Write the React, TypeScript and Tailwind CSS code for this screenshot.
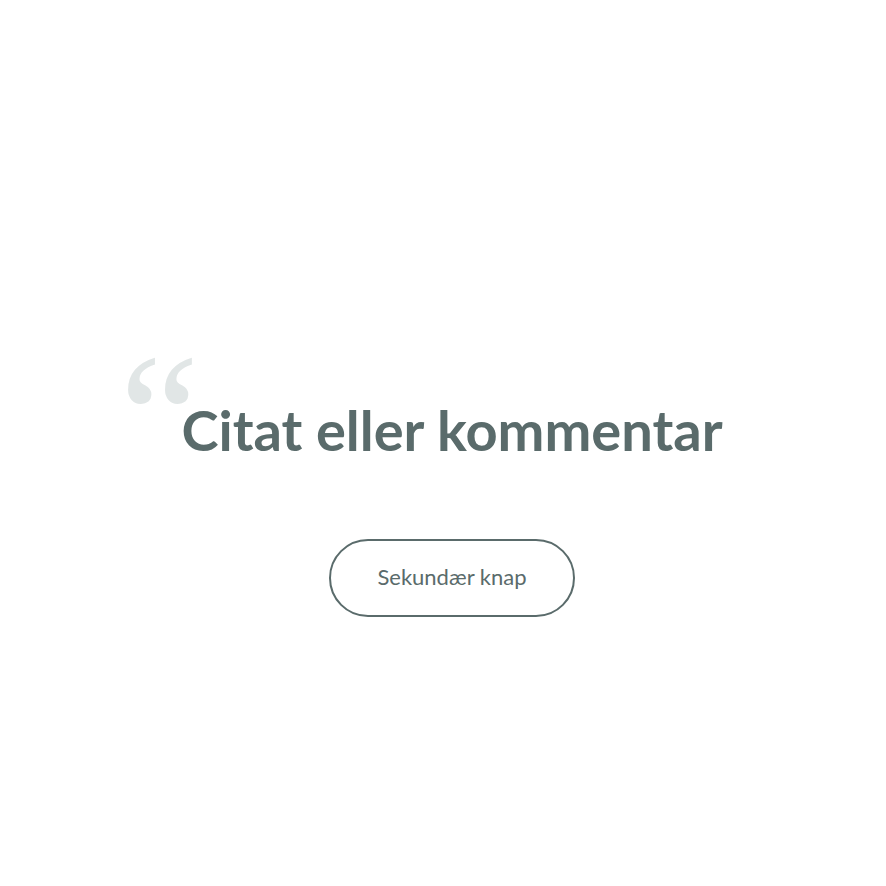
export default function App() {
  return (
    <div className="min-h-[886px] w-full bg-white flex flex-col items-center pt-[398px] pl-[18px] font-['Lato','Open_Sans',sans-serif] text-[#5a6b6b]">
      <div className="relative">
        <span className="absolute left-[-62px] top-[-70px] font-['Liberation_Serif',serif] text-[180px] leading-none text-[#e1e6e6] select-none">
          “
        </span>
        <h1 className="relative text-[56px] leading-[64px] font-bold">Citat eller kommentar</h1>
      </div>
      <button
        type="button"
        className="mt-[77px] w-[246px] h-[78px] pb-1 rounded-full border-2 border-[#5a6b6b] text-[22px] text-[#5a6b6b]"
      >
        Sekundær knap
      </button>
    </div>
  );
}
